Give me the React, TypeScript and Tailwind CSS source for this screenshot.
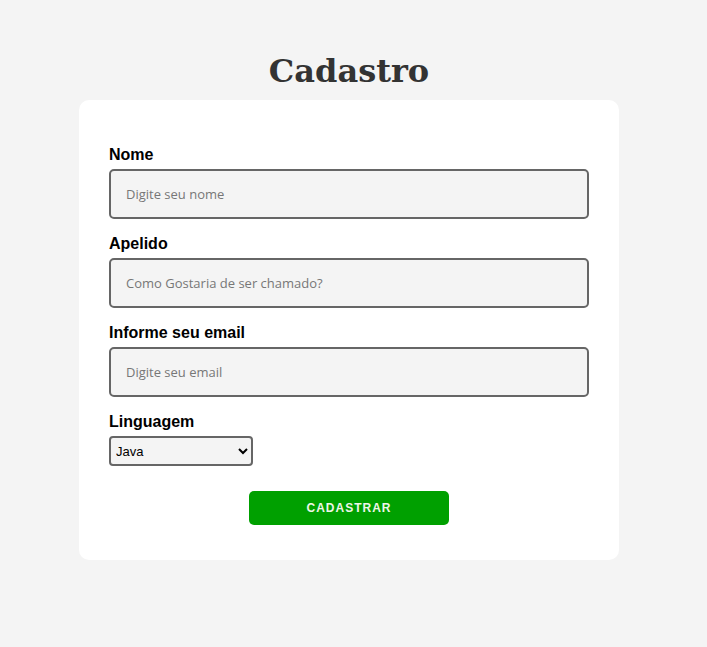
import React from "react";

const fields = [
  { label: "Nome", placeholder: "Digite seu nome" },
  { label: "Apelido", placeholder: "Como Gostaria de ser chamado?" },
  { label: "Informe seu email", placeholder: "Digite seu email" },
];

export default function App() {
  return (
    <div className="min-h-[647px] w-full bg-[#f4f4f4] pt-[53px]" style={{ fontFamily: '"Liberation Sans", Arial, sans-serif' }}>
      <div className="w-[698px]">
        <h1 className="text-center text-[32px] font-bold leading-[37px] text-[#333]" style={{ fontFamily: '"DejaVu Serif", serif' }}>
          Cadastro
        </h1>
        <div className="mx-auto mt-[10px] w-[540px] rounded-[10px] bg-white px-[30px] pt-[46px] pb-[35px]">
          {fields.map((f) => (
            <div key={f.label} className="mb-[16px] flex flex-col">
              <label className="text-[16px] font-bold leading-[18px] text-black">{f.label}</label>
              <input
                type="text"
                placeholder={f.placeholder}
                className="mt-[5px] h-[50px] w-full rounded-[5px] border-2 border-[#666] bg-[#f4f4f4] px-[15px] text-[13px] text-black outline-none placeholder:text-[#777]"
                style={{ fontFamily: '"Open Sans", sans-serif' }}
              />
            </div>
          ))}
          <div className="flex flex-col">
            <label className="text-[16px] font-bold leading-[18px] text-black">Linguagem</label>
            <select
              defaultValue="Java"
              className="mt-[5px] h-[30px] w-[144px] rounded-[4px] border-2 border-[#666] bg-[#f4f4f4] px-[1px] text-[13px] text-black"
              style={{ fontFamily: '"Liberation Sans", Arial, sans-serif' }}
            >
              <option>Java</option>
              <option>Python</option>
              <option>JavaScript</option>
            </select>
          </div>
          <div className="mt-[25px] flex justify-center">
            <button className="h-[34px] w-[200px] rounded-[5px] bg-[#00a000] text-[12px] font-bold tracking-[1px] text-[#eef5e8]">
              CADASTRAR
            </button>
          </div>
        </div>
      </div>
    </div>
  );
}
